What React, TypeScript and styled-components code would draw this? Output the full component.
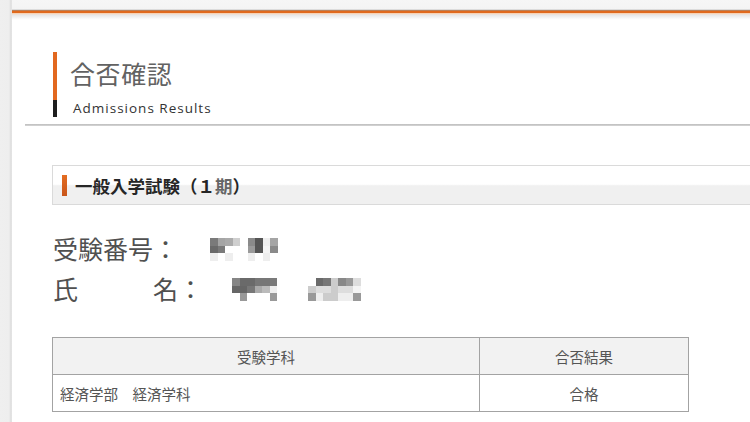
import React from "react";
import styled, { createGlobalStyle } from "styled-components";

const GlobalStyle = createGlobalStyle`
  html, body {
    margin: 0;
    padding: 0;
    background: #fff;
  }
  body {
    font-family: "Noto Sans CJK JP", "Noto Sans", sans-serif;
    color: #444;
  }
`;

const Page = styled.div`
  display: flex;
  width: 750px;
  height: 422px;
  overflow: hidden;
  background: #fff;
`;

const Gutter = styled.div`
  flex: 0 0 12px;
  background: linear-gradient(to right, #efefef 0, #eeeeee 9px, #dddddd 11px, #e8e8e8 12px);
`;

const Main = styled.div`
  flex: 1;
  display: flex;
  flex-direction: column;
  min-width: 0;
`;

const TopBand = styled.div`
  height: 20px;
  background: linear-gradient(
    to bottom,
    #f6f6f6 0,
    #f4f4f4 9px,
    #dcdcdc 9px,
    #dcdcdc 10px,
    #b9805a 10px,
    #b9805a 11px,
    #e0691d 11px,
    #e0691d 13px,
    #f7c9a2 13px,
    #f3dccb 14px,
    #e6e6e6 15px,
    #f6f6f6 18px,
    #ffffff 20px
  );
`;

const TitleBlock = styled.header`
  display: flex;
  margin: 32px 0 0 41px;
`;

const Accent = styled.div`
  display: flex;
  flex-direction: column;
  width: 4px;
`;

const AccentPart = styled.span<{ $color: string; $h?: number }>`
  display: block;
  background: ${(p) => p.$color};
  flex: ${(p) => (p.$h ? `0 0 ${p.$h}px` : "1")};
`;

const TitleText = styled.div`
  display: flex;
  flex-direction: column;
  padding: 4px 0 0 13px;
`;

const Title = styled.h1`
  margin: 0;
  font-size: 25px;
  line-height: 34px;
  font-weight: 400;
  color: #626262;
  letter-spacing: 0.6px;
`;

const Subtitle = styled.div`
  margin: 9px 0 0 3px;
  font-family: "Open Sans", "DejaVu Sans", sans-serif;
  font-size: 13.5px;
  line-height: 18px;
  color: #333;
  letter-spacing: 1px;
`;

const Divider = styled.hr`
  margin: 7px 0 0 13px;
  border: none;
  height: 2px;
  background: linear-gradient(#bdbdbd, #d6d6d6);
`;

const Content = styled.section`
  display: flex;
  flex-direction: column;
  margin-left: 40px;
`;

const SectionBar = styled.div`
  display: flex;
  align-items: center;
  gap: 8px;
  height: 38px;
  margin: 39px -4px 0 0;
  padding-left: 9px;
  border: 1px solid #dadada;
  border-right: none;
  background: linear-gradient(to bottom, #ffffff 0, #ffffff 48%, #f0f0f0 52%, #f0f0f0 100%);
`;

const SectionMark = styled.span`
  width: 5px;
  height: 21px;
  background: linear-gradient(to bottom, #e46d22, #c9561a);
`;

const SectionTitle = styled.h2`
  margin: 0;
  font-size: 17.5px;
  font-weight: 700;
  color: #262626;
`;

const Faded = styled.span`
  color: #666;
`;

const InfoList = styled.dl`
  display: flex;
  flex-direction: column;
  margin: 23px 0 0 1px;
`;

const InfoRow = styled.div`
  display: flex;
  align-items: center;
  height: 40px;
`;

const Label = styled.dt`
  font-size: 25px;
  line-height: 40px;
  color: #505050;
  font-weight: 400;
`;

const Value = styled.dd<{ $offset: number }>`
  display: flex;
  gap: 31px;
  margin: 3px 0 0 ${(p) => p.$offset}px;
`;

const MosaicGrid = styled.div<{ $cols: number }>`
  display: grid;
  grid-template-columns: repeat(${(p) => p.$cols}, 7.5px);
  grid-auto-rows: 7.5px;
  filter: blur(0.3px);
`;

const Cell = styled.span<{ $c: string }>`
  background: ${(p) => p.$c};
`;

function Mosaic({ rows }: { rows: string[][] }) {
  return (
    <MosaicGrid $cols={rows[0].length} aria-hidden>
      {rows.flat().map((c, i) => (
        <Cell key={i} $c={c} />
      ))}
    </MosaicGrid>
  );
}

const numberMosaic = [
  ["#7a7a7a", "#a5a5a5", "#ababab", "#cfcfcf", "#fff", "#8a8a8a", "#555", "#eee", "#a5a5a5"],
  ["#6a6a6a", "#7a7a7a", "#fff", "#fff", "#fff", "#9a9a9a", "#555", "#f4f4f4", "#8a8a8a"],
  ["#eee", "#fff", "#eee", "#fff", "#fff", "#eee", "#fff", "#eee", "#fff"],
];

const familyMosaic = [
  ["#858585", "#6a6a6a", "#6a6a6a", "#777", "#777", "#7a7a7a"],
  ["#666", "#666", "#777", "#aaa", "#bbb", "#eee"],
  ["#fff", "#999", "#fff", "#fff", "#fff", "#999"],
];

const givenMosaic = [
  ["#fff", "#6a6a6a", "#777", "#ccc", "#888", "#999", "#ddd"],
  ["#ccc", "#ddd", "#ddd", "#ccc", "#ddd", "#ddd", "#f4f4f4"],
  ["#999", "#eee", "#ccc", "#ccc", "#eee", "#eee", "#999"],
];

const ResultTable = styled.table`
  width: 637px;
  margin-top: 29px;
  border-collapse: collapse;
  font-size: 14.5px;
  color: #555;
`;

const HeadCell = styled.th<{ $w?: number }>`
  width: ${(p) => (p.$w ? `${p.$w}px` : "auto")};
  height: 36px;
  padding: 0;
  border: 1px solid #a3a3a3;
  background: #f2f2f2;
  font-weight: 400;
  text-align: center;
`;

const BodyCell = styled.td<{ $align?: "left" | "center" }>`
  height: 36px;
  padding: 0 0 0 ${(p) => (p.$align === "center" ? 0 : 7)}px;
  border: 1px solid #a3a3a3;
  text-align: ${(p) => p.$align ?? "left"};
`;

export default function App() {
  return (
    <>
      <GlobalStyle />
      <Page>
        <Gutter />
        <Main>
          <TopBand />
          <TitleBlock>
            <Accent>
              <AccentPart $color="#e2681f" />
              <AccentPart $color="#1e1e1e" $h={17} />
            </Accent>
            <TitleText>
              <Title>合否確認</Title>
              <Subtitle>Admissions Results</Subtitle>
            </TitleText>
          </TitleBlock>
          <Divider />

          <Content>
            <SectionBar>
              <SectionMark />
              <SectionTitle>
                一般入学試験（１<Faded>期</Faded>）
              </SectionTitle>
            </SectionBar>

            <InfoList>
              <InfoRow>
                <Label>受験番号：</Label>
                <Value $offset={32}>
                  <Mosaic rows={numberMosaic} />
                </Value>
              </InfoRow>
              <InfoRow>
                <Label>氏　　　名：</Label>
                <Value $offset={29}>
                  <Mosaic rows={familyMosaic} />
                  <Mosaic rows={givenMosaic} />
                </Value>
              </InfoRow>
            </InfoList>

            <ResultTable>
              <thead>
                <tr>
                  <HeadCell $w={426}>受験学科</HeadCell>
                  <HeadCell>合否結果</HeadCell>
                </tr>
              </thead>
              <tbody>
                <tr>
                  <BodyCell>経済学部　経済学科</BodyCell>
                  <BodyCell $align="center">合格</BodyCell>
                </tr>
              </tbody>
            </ResultTable>
          </Content>
        </Main>
      </Page>
    </>
  );
}
